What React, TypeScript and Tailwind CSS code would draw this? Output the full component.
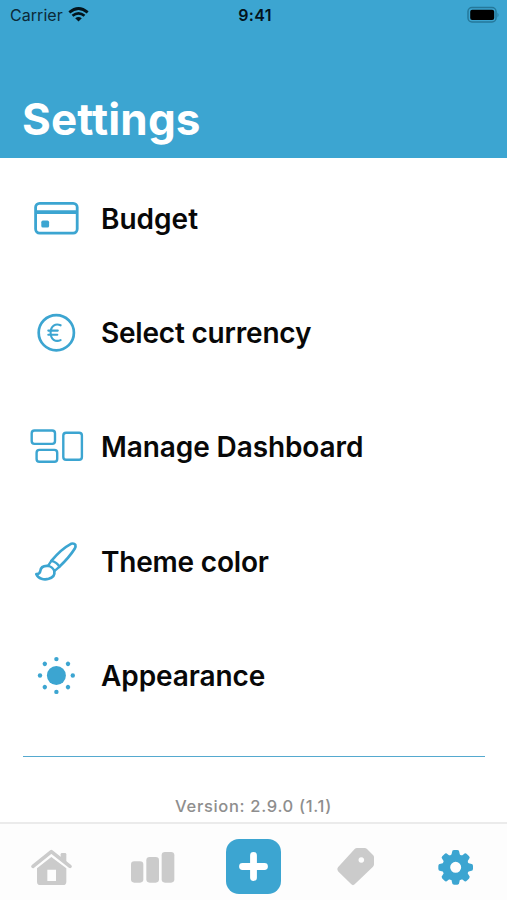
import type { ReactNode } from "react";

function CardIcon() {
  return (
    <svg viewBox="0 0 56 56" className="size-14" fill="none" stroke="currentColor">
      <rect x="7.6" y="12.3" width="41.6" height="29.8" rx="4" strokeWidth="2.8" />
      <path d="M7 21.1H49.5" strokeWidth="3.8" />
      <rect x="13.3" y="29.6" width="7.8" height="7" rx="1.6" fill="currentColor" stroke="none" />
    </svg>
  );
}

function EuroIcon() {
  return (
    <svg viewBox="0 0 56 56" className="size-14" fill="none" stroke="currentColor" strokeLinecap="round">
      <circle cx="28.3" cy="27.7" r="17.6" strokeWidth="2.7" />
      <path d="M32.600 20.300C27.500 18 22.600 21 22.600 27.700S27.500 37.400 32.600 35.100M20.300 25.600H29.800M20.300 29.800H29.300" strokeWidth="2.1" />
    </svg>
  );
}

function DashboardIcon() {
  return (
    <svg viewBox="0 0 56 56" className="size-14" fill="none" stroke="currentColor" strokeWidth="2.4">
      <rect x="3.7" y="11.5" width="23.3" height="13.4" rx="2.8" />
      <rect x="8.6" y="30.9" width="20.6" height="11.8" rx="2.8" />
      <rect x="35.3" y="13.7" width="18.6" height="27" rx="2.8" />
    </svg>
  );
}

function BrushIcon() {
  return (
    <svg viewBox="24 10.5 168 168" className="size-14" fill="none" stroke="currentColor" strokeWidth="8" strokeLinejoin="round" strokeLinecap="round">
      <path d="M94 91C110 72 134 50 153 40Q162 37 166 43Q168 48 164 55C152 74 135 93 118 109" />
      <path d="M94 91L84 106Q98 108 103 122L118 109Q112 95 94 91Z" strokeWidth="7" />
      <path d="M84 106C69 105 62 112 61 121C60 128 56 131 49 131C55 145 72 149 86 145C98 141 105 133 103 122" />
    </svg>
  );
}

function SunIcon() {
  const angles = [0, 45, 90, 135, 180, 225, 270, 315];
  return (
    <svg viewBox="0 0 56 56" className="size-14" fill="currentColor">
      <circle cx="28.4" cy="27.5" r="9.5" />
      {angles.map((a) => (
        <circle key={a} cx="28.4" cy="11.1" r="2.2" transform={`rotate(${a} 28.4 27.5)`} />
      ))}
    </svg>
  );
}

function HomeIcon() {
  return (
    <svg viewBox="8 27 168 168" className="size-14" fill="currentColor">
      <path d="M38 109L93 65L149 109" fill="none" stroke="currentColor" strokeWidth="11" strokeLinecap="round" strokeLinejoin="round" />
      <path d="M121 84V73Q121 69 125 69H134Q138 69 138 73V98Z" />
      <path fillRule="evenodd" d="M50 115L93 81L138 115V155Q138 165 128 165H60Q50 165 50 155ZM81 119V153H107V119Z" />
    </svg>
  );
}

function BarsIcon() {
  return (
    <svg viewBox="312 27 168 168" className="size-14" fill="currentColor">
      <rect x="333" y="94" width="37" height="64" rx="10" />
      <rect x="379" y="81" width="38" height="77" rx="10" />
      <rect x="425" y="66" width="38" height="92" rx="10" />
    </svg>
  );
}

function TagIcon() {
  return (
    <svg viewBox="21 27 168 168" className="size-14" fill="currentColor">
      <path fillRule="evenodd" d="M111 54H134Q138 54 141 57L159 75Q162 78 162 82V103Q162 107 159 110L104 163Q99 168 94 163L54 124Q49 118 54 112L104 57Q107 54 111 54ZM124 81.500a8.500 8.500 0 1 0 .01 0Z" />
    </svg>
  );
}

function GearIcon() {
  const teeth = [0, 45, 90, 135, 180, 225, 270, 315];
  return (
    <svg viewBox="-83 -85 168 168" className="size-14" fill="currentColor">
      <circle r="28" fill="none" stroke="currentColor" strokeWidth="23" />
      {teeth.map((a) => (
        <path key={a} d="M-16 -35Q-11 -38 -11 -45Q-11 -52 -5 -52H5Q11 -52 11 -45Q11 -38 16 -35Z" transform={`rotate(${a})`} />
      ))}
    </svg>
  );
}

function StatusBar() {
  return (
    <div className="grid h-[29px] grid-cols-3 items-center pr-[7px] pl-2.5 text-[#0b2a38]">
      <div className="flex items-center gap-[5px]">
        <span className="text-[16px] tracking-[0.05px]">Carrier</span>
        <svg viewBox="0 0 21 15" className="h-[15px] w-[21px]" fill="none" stroke="#03141c" strokeWidth="2.700">
          <path d="M1.300 5.400Q10.500 -2.400 19.700 5.400M4.500 8.800Q10.500 3.800 16.500 8.800" />
          <path d="M7.200 11.300Q10.500 8.600 13.800 11.300L10.500 14.600Z" fill="#03141c" stroke="none" />
        </svg>
      </div>
      <span className="text-center text-[16px] font-semibold tracking-[0.3px] text-[#03141c]">9:41</span>
      <svg viewBox="0 0 34 18" className="h-[18px] w-[34px] justify-self-end">
        <rect x="2" y="1.500" width="28" height="14.500" rx="4" fill="none" stroke="#25789a" strokeWidth="1.500" />
        <rect x="4.200" y="3.700" width="24" height="10.200" rx="2" fill="#000" />
        <path d="M31.500 6.500Q33.500 9 31.500 11.500Z" fill="#25789a" />
      </svg>
    </div>
  );
}

function Row({ icon, label, spacing }: { icon: ReactNode; label: string; spacing: string }) {
  return (
    <li className="flex h-[114.2px] items-center gap-[17px] pl-7">
      <span className="text-[#3ca5d1]">{icon}</span>
      <span className={`text-[28px] leading-none font-semibold whitespace-nowrap text-[#080808] ${spacing}`}>{label}</span>
    </li>
  );
}

export default function App() {
  return (
    <div className="flex h-[900px] w-[507px] flex-col overflow-hidden bg-white font-['Inter',sans-serif]">
      <header className="flex h-[157.500px] shrink-0 flex-col justify-between bg-[#3ca5d1]">
        <StatusBar />
        <h1 className="pb-[16.500px] pl-[22px] text-[44px] leading-[44px] font-bold tracking-[0.15px] text-white">Settings</h1>
      </header>
      <main className="flex flex-1 flex-col">
        <ul className="pt-[4.500px]">
          <Row icon={<CardIcon />} label="Budget" spacing="tracking-normal" />
          <Row icon={<EuroIcon />} label="Select currency" spacing="tracking-[-0.2px]" />
          <Row icon={<DashboardIcon />} label="Manage Dashboard" spacing="tracking-[-0.1px]" />
          <Row icon={<BrushIcon />} label="Theme color" spacing="tracking-[-0.2px]" />
          <Row icon={<SunIcon />} label="Appearance" spacing="tracking-[-0.1px]" />
        </ul>
        <div className="mx-[22.500px] mt-[23px] h-[1.500px] shrink-0 bg-[#55a9cf]" />
        <p className="mt-[39px] text-center text-[16.500px] leading-5 font-medium tracking-[0.68px] text-[#8e8e8e]">Version: 2.9.0 (1.1)</p>
      </main>
      <nav className="grid h-[78.500px] shrink-0 grid-cols-5 justify-items-center border-t-2 border-[#ebebeb] bg-[#fdfdfd] pt-[15.500px] text-[#cbcbcb]">
        <HomeIcon />
        <BarsIcon />
        <div className="flex size-[55px] items-center justify-center rounded-[13px] bg-[#3ca5d1] text-white">
          <svg viewBox="0 0 55 55" className="size-[55px]" stroke="currentColor" strokeWidth="6.800" strokeLinecap="round">
            <path d="M27.500 16.500V38.500M16.500 27.500H38.500" />
          </svg>
        </div>
        <TagIcon />
        <span className="text-[#3ca5d1]"><GearIcon /></span>
      </nav>
    </div>
  );
}
